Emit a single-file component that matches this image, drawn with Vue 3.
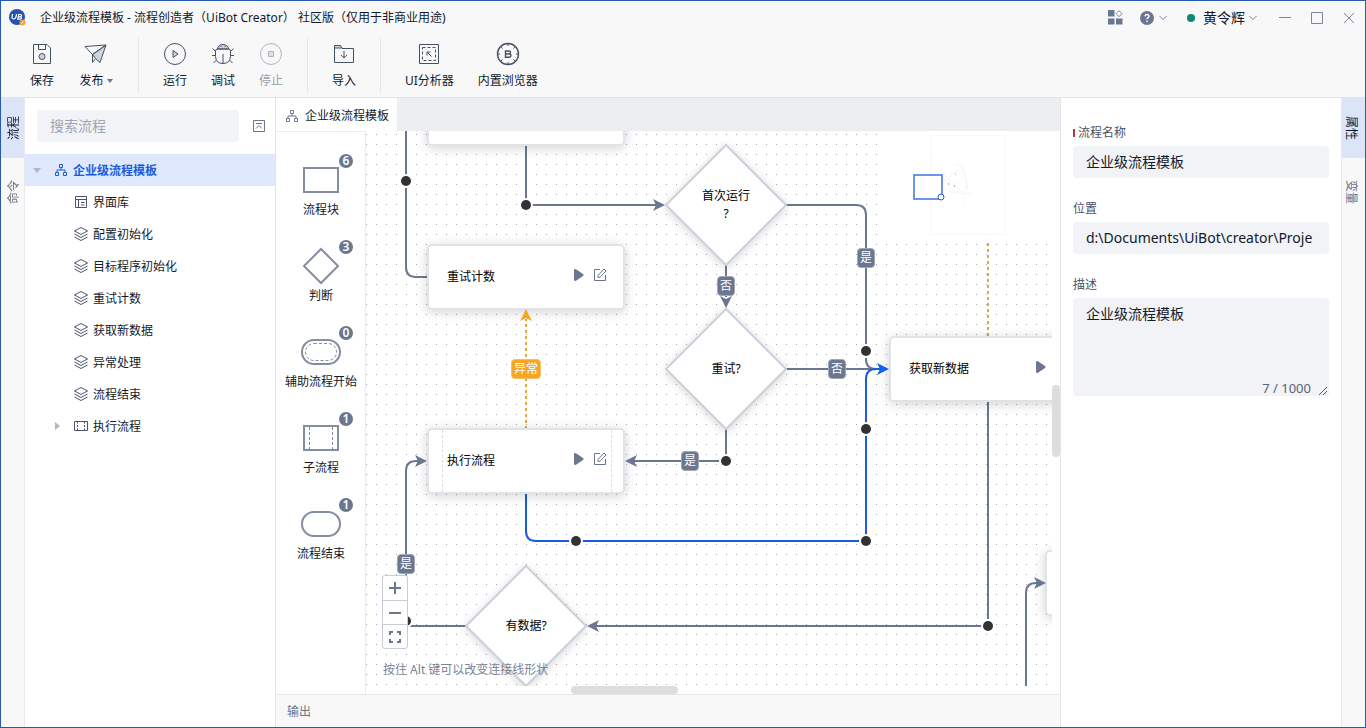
<script setup>
import { ref } from 'vue'

const search = ref('')
const flowName = ref('企业级流程模板')
const location = ref('d:\\Documents\\UiBot\\creator\\Proje')
const description = ref('企业级流程模板')

const toolGroups = [
  [
    { id: 'save', label: '保存' },
    { id: 'publish', label: '发布', menu: true },
  ],
  [
    { id: 'run', label: '运行' },
    { id: 'debug', label: '调试' },
    { id: 'stop', label: '停止', disabled: true },
  ],
  [{ id: 'import', label: '导入' }],
  [
    { id: 'analyzer', label: 'UI分析器', wide: true },
    { id: 'browser', label: '内置浏览器', wide: true },
  ],
]

const tree = [
  { label: '企业级流程模板', icon: 'root' },
  { label: '界面库', icon: 'library' },
  { label: '配置初始化', icon: 'layers' },
  { label: '目标程序初始化', icon: 'layers' },
  { label: '重试计数', icon: 'layers' },
  { label: '获取新数据', icon: 'layers' },
  { label: '异常处理', icon: 'layers' },
  { label: '流程结束', icon: 'layers' },
  { label: '执行流程', icon: 'sub' },
]

const palette = [
  { id: 'block', label: '流程块', count: 6 },
  { id: 'decision', label: '判断', count: 3 },
  { id: 'aux', label: '辅助流程开始', count: 0 },
  { id: 'sub', label: '子流程', count: 1 },
  { id: 'end', label: '流程结束', count: 1 },
]

const edges = [
  { kind: 'plain', d: 'M40 0V136Q40 146 50 146H62' },
  { kind: 'plain', d: 'M160 14V74H290' },
  { kind: 'plain', d: 'M420 74H490Q500 74 500 84V228Q500 238 510 238H516' },
  { kind: 'plain', d: 'M360 134V166' },
  { kind: 'plain', d: 'M420 238H516' },
  { kind: 'plain', d: 'M360 298V330H268' },
  { kind: 'plain', d: 'M622 271V495H230' },
  { kind: 'plain', d: 'M100 495H40V340Q40 330 50 330H54' },
  { kind: 'plain', d: 'M660 556V462Q660 452 670 452H672' },
  { kind: 'error', d: 'M160 298V188' },
  { kind: 'error', d: 'M622 100V206' },
  { kind: 'active', d: 'M160 363V400Q160 410 170 410H500V248Q500 238 510 238H516' },
]

const arrows = [
  { kind: 'plain', x: 299, y: 74, turn: 0 },
  { kind: 'plain', x: 360, y: 177, turn: 90 },
  { kind: 'plain', x: 259, y: 330, turn: 180 },
  { kind: 'plain', x: 221, y: 495, turn: 180 },
  { kind: 'plain', x: 61, y: 330, turn: 0 },
  { kind: 'plain', x: 680, y: 452, turn: 0 },
  { kind: 'error', x: 160, y: 178, turn: -90 },
  { kind: 'active', x: 523, y: 238, turn: 0 },
]

const joints = [
  [40, 50], [160, 74], [500, 220], [360, 330], [500, 298],
  [210, 410], [500, 410], [622, 495], [40, 490],
]

const blocks = [
  { x: 61, y: -51, label: '' },
  { x: 61, y: 113, label: '重试计数', edit: true },
  { x: 61, y: 297, label: '执行流程', edit: true, sub: true },
  { x: 523, y: 205, label: '获取新数据', edit: true },
  { x: 679, y: 419, label: '' },
]

const decisions = [
  { x: 300, y: 14, label: '首次运行\n?' },
  { x: 300, y: 178, label: '重试?' },
  { x: 100, y: 435, label: '有数据?' },
]

const tags = [
  { x: 500, y: 127, label: '是' },
  { x: 360, y: 155, label: '否' },
  { x: 471, y: 238, label: '否' },
  { x: 324, y: 330, label: '是' },
  { x: 40, y: 433, label: '是' },
  { x: 160, y: 238, label: '异常', error: true },
]

const at = (o) => ({ left: o.x + 'px', top: o.y + 'px' })
</script>

<template>
  <div class="window">
    <header>
      <div class="titlebar">
        <svg class="logo" width="18" height="18" viewBox="0 0 18 18">
          <circle cx="8" cy="8" r="8" fill="#2452b5" />
          <path d="M3.500 5 3 8Q2.800 10 4.500 10T7 8L7.500 5M8.800 10.200 9.700 5.500H11.300Q12.700 5.500 12.500 6.700T11 7.800H9.500 11.300Q12.700 8 12.400 9.200T10.800 10.200Z" fill="none" stroke="#fff" stroke-width="1.200" />
          <circle cx="13.500" cy="13.500" r="3" fill="#eaa244" />
          <path d="M12.500 14.500 14.500 12.500" stroke="#fff" />
        </svg>
        <h1>企业级流程模板 - 流程创造者（UiBot Creator） 社区版（仅用于非商业用途)</h1>
        <div class="title-actions">
          <button class="bare" aria-label="应用">
            <svg width="15" height="15" viewBox="0 0 15 15">
              <path d="M0 0H6.500V6.500H0ZM0 8.500H6.500V14.500H0ZM8 8.500H14.500V14.500H8Z" fill="#6b7690" />
              <path d="M11 .7 14 3.700 11 6.700 8 3.700Z" fill="none" stroke="#7d879b" />
            </svg>
          </button>
          <button class="bare help" aria-label="帮助">
            <svg width="14" height="14" viewBox="0 0 14 14">
              <circle cx="7" cy="7" r="7" fill="#6b7690" />
              <path d="M5 5.300Q5.200 3.500 7 3.500T9 5.200Q9 6.200 7.800 6.800 7 7.300 7 8.300M7 9.500V11" fill="none" stroke="#fff" stroke-width="1.400" />
            </svg>
            <svg width="8" height="6" viewBox="0 0 8 6"><path d="M.5 1 4 4.500 7.500 1" class="chev" /></svg>
          </button>
          <button class="bare user">
            <i class="online"></i><span>黄令辉</span>
            <svg width="8" height="6" viewBox="0 0 8 6"><path d="M.5 1 4 4.500 7.500 1" class="chev" /></svg>
          </button>
          <div class="win-buttons">
            <button class="bare" aria-label="最小化"><svg width="12" height="12"><path d="M0 5.500H12" class="win" /></svg></button>
            <button class="bare" aria-label="最大化"><svg width="12" height="12"><path d="M.5 .5H11.500V11.500H.5Z" class="win" /></svg></button>
            <button class="bare" aria-label="关闭"><svg width="12" height="12"><path d="M1 1 11 11M11 1 1 11" class="win" /></svg></button>
          </div>
        </div>
      </div>

      <nav class="toolbar">
        <div v-for="(group, g) in toolGroups" :key="g" class="tool-group">
          <button v-for="t in group" :key="t.id" class="tool" :class="{ wide: t.wide, menu: t.menu }" :disabled="t.disabled">
            <svg width="24" height="24" viewBox="0 0 24 24">
              <template v-if="t.id === 'save'">
                <path d="M3.500 2.500H17L20.500 6V21.500H3.500ZM8.500 2.500V7.500H15.500V2.500" />
                <circle cx="12" cy="14.500" r="3" class="tint" />
              </template>
              <template v-else-if="t.id === 'publish'">
                <path d="M8.500 12.500 22 3 16 20.500 11.500 16.500Z" class="tint" />
                <path d="M8.500 12.500 1 4.500 22 3 8.500 12.500V20.500L11.500 16.500" />
              </template>
              <template v-else-if="t.id === 'run'">
                <circle cx="12" cy="12" r="10.500" />
                <path d="M10 8.500 15 12 10 15.500Z" class="tint" />
              </template>
              <template v-else-if="t.id === 'debug'">
                <path d="M6.500 7Q7 2.500 12 2.500T17.500 7Z" class="tint" />
                <path d="M4.500 9Q4.500 7 6.500 7H17.500Q19.500 7 19.500 9V14.500Q19 21.500 12 21.500T4.500 14.500ZM12 12V21.500M4.500 9.500 1.500 6.500M19.500 9.500 22.500 6.500M4.500 13.500H1M19.500 13.500H23M5.500 18 2.500 21M18.500 18 21.500 21M9.500 4.500H10.500M13.500 4.500H14.500" />
              </template>
              <template v-else-if="t.id === 'stop'">
                <circle cx="12" cy="12" r="10.500" />
                <path d="M9.500 9.500H14.500V14.500H9.500Z" class="tint" />
              </template>
              <template v-else-if="t.id === 'import'">
                <path d="M2.500 6V3.500H8.500L10 6Z" class="tint" />
                <path d="M2.500 6V20.500H21.500V6.500H10M12 9V16M9 13 12 16 15 13" />
              </template>
              <template v-else-if="t.id === 'analyzer'">
                <path d="M2.500 2.500H21.500V21.500H2.500Z" />
                <path d="M5.500 5.500H18.500V18.500H5.500Z" stroke-dasharray="3 2" />
                <path d="M10 13.500V10H13.500M10 10 14.500 14.500" />
              </template>
              <template v-else>
                <circle cx="12" cy="12" r="10.500" stroke-width="1.400" />
                <path d="M12 1.500V4M12 20V22.500M1.500 12H4M20 12H22.500M5 5 6.500 6.500M19 5 17.500 6.500M5 19 6.500 17.500M19 19 17.500 17.500" />
                <path d="M9.500 9H13Q14.500 9 14.500 10.500T13 12H9.500 13.500Q15 12.200 15 13.600T13.500 15.200H9.500Z" stroke-width="1.400" />
              </template>
            </svg>
            <span class="tool-label">{{ t.label }}<i v-if="t.menu" class="caret"></i></span>
          </button>
        </div>
      </nav>
    </header>

    <main>
      <nav class="rail left">
        <button class="on"><span>流程</span></button>
        <button><span>命令</span></button>
      </nav>

      <aside class="explorer">
        <div class="search-row">
          <input v-model="search" type="text" placeholder="搜索流程" aria-label="搜索流程" />
          <button class="bare" aria-label="全部折叠">
            <svg width="12" height="12" viewBox="0 0 12 12"><path d="M.5 .5H11.500V11.500H.5ZM3 3.500H9M3 8.500 6 5.500 9 8.500" fill="none" stroke="#6b7690" /></svg>
          </button>
        </div>
        <ul class="tree">
          <li v-for="(n, i) in tree" :key="n.label">
            <button :class="['node-row', n.icon, { selected: i === 0 }]">
              <i class="twist"></i>
              <svg v-if="n.icon === 'root'" width="14" height="14" viewBox="0 0 14 14"><path d="M5.500 1.500H8.500V4.500H5.500ZM1.500 9.500H4.500V12.500H1.500ZM9.500 9.500H12.500V12.500H9.500ZM7 4.500V7M3 9.500V7H11V9.500" /></svg>
              <svg v-else-if="n.icon === 'library'" width="14" height="14" viewBox="0 0 14 14"><path d="M1.500 1.500H12.500V12.500H1.500ZM1.500 4.500H12.500M4.500 4.500V12.500M7 7.500H10.500M7 10H10.500" /></svg>
              <svg v-else-if="n.icon === 'layers'" width="14" height="14" viewBox="0 0 14 14"><path d="M7 .5 13.500 4 7 7.500 .5 4ZM.5 7 7 10.500 13.500 7M.5 10 7 13.500 13.500 10" /></svg>
              <svg v-else width="14" height="14" viewBox="0 0 14 14"><path d="M.5 2.500H13.500V11.500H.5Z" /><path d="M3.500 2.500V11.500M10.500 2.500V11.500" stroke-dasharray="2 1.500" /></svg>
              <span>{{ n.label }}</span>
            </button>
          </li>
        </ul>
      </aside>

      <section class="editor">
        <div class="tabs">
          <button class="tab">
            <svg width="14" height="14" viewBox="0 0 14 14"><path d="M5.500 1.500H8.500V4.500H5.500ZM1.500 9.500H4.500V12.500H1.500ZM9.500 9.500H12.500V12.500H9.500ZM7 4.500V7M3 9.500V7H11V9.500" /></svg>
            <span>企业级流程模板</span>
          </button>
        </div>

        <div class="workspace">
          <div class="palette">
            <button v-for="p in palette" :key="p.id" class="shape">
              <svg width="42" height="38" viewBox="0 0 42 38">
                <path v-if="p.id === 'block'" d="M4 7H38V31H4Z" />
                <path v-else-if="p.id === 'decision'" d="M21 2 38 19 21 36 4 19Z" />
                <template v-else-if="p.id === 'aux'">
                  <rect x="2" y="7" width="38" height="24" rx="12" />
                  <rect x="5.500" y="10.500" width="31" height="17" rx="8.500" class="thin" />
                </template>
                <template v-else-if="p.id === 'sub'">
                  <path d="M4 7H38V31H4Z" />
                  <path d="M9.500 8V30M32.500 8V30" class="thin" />
                </template>
                <rect v-else x="2" y="7" width="38" height="24" rx="12" />
              </svg>
              <span>{{ p.label }}</span>
              <b class="count">{{ p.count }}</b>
            </button>
          </div>

          <div class="viewport">
            <div class="canvas">
              <svg class="edges" width="100%" height="100%">
                <defs>
                  <pattern id="grid" width="10" height="10" patternUnits="userSpaceOnUse">
                    <rect x="0" y="3" width="1" height="1" fill="#a4a7ad" />
                  </pattern>
                </defs>
                <rect width="100%" height="100%" fill="url(#grid)" />
                <path v-for="e in edges" :key="e.d" :d="e.d" :class="['edge', e.kind]" />
              </svg>

              <div v-for="(b, i) in blocks" :key="'b' + i" class="block" :class="{ sub: b.sub }" :style="at(b)">
                <template v-if="b.label">
                  <span>{{ b.label }}</span>
                  <button class="bare" aria-label="运行此块"><svg width="12" height="14" viewBox="0 0 12 14"><path d="M1 2.500Q1 .5 3 1.300L10 6Q11.500 7 10 8L3 12.700Q1 13.500 1 11.500Z" fill="#6b7690" /></svg></button>
                  <button class="bare" aria-label="编辑"><svg width="14" height="14" viewBox="0 0 14 14"><path d="M7 1.500H1.500V12.500H12.500V7M5 9.500V7.500L11 1 13 3 7 9.200Z" fill="none" stroke="#6b7690" /></svg></button>
                </template>
              </div>

              <div v-for="d in decisions" :key="d.label" class="decision" :style="at(d)">
                <svg width="120" height="120" viewBox="0 0 120 120"><path d="M60 0 120 60 60 120 0 60Z" fill="#fff" stroke="#ccd0da" stroke-width="2" /></svg>
                <span>{{ d.label }}</span>
              </div>

              <svg class="edges" width="100%" height="100%">
                <path v-for="a in arrows" :key="a.x + '-' + a.y" d="M0 0-12-6-9 0-12 6Z" :class="['arrow', a.kind]" :transform="`translate(${a.x} ${a.y}) rotate(${a.turn})`" />
                <g v-for="j in joints" :key="j.join()">
                  <circle :cx="j[0]" :cy="j[1]" r="7" fill="#fff" />
                  <circle :cx="j[0]" :cy="j[1]" r="5" fill="#333" />
                </g>
              </svg>

              <span v-for="(t, i) in tags" :key="'t' + i" class="tag" :class="{ error: t.error }" :style="at(t)">{{ t.label }}</span>

              <div class="minimap">
                <svg width="172" height="109" viewBox="0 0 172 109">
                  <rect x="50.500" y="4.500" width="75" height="99" fill="#fff" stroke="#f8f8f9" />
                  <path d="M61 39V48H66M64 42 74 55 83 46 77 39 69 47M70 53V61H77V55M77 61H86V50M75 34H82L88 58M80 63H92M84 66V71M58 50H66" fill="none" stroke="#f4f4f7" />
                  <path d="M68 53H69M74 55H75" stroke="#667" />
                  <path d="M75 43H76" stroke="#f0a030" />
                  <rect x="34" y="44" width="28" height="24" fill="#fff" stroke="#3c76df" stroke-width="1.500" />
                  <circle cx="61" cy="66" r="3" fill="#fff" stroke="#1f5fd6" />
                </svg>
              </div>

              <div class="overlay">
                <div class="zoom">
                  <button aria-label="放大"><svg width="12" height="12"><path d="M6 0V12M0 6H12" /></svg></button>
                  <button aria-label="缩小"><svg width="12" height="12"><path d="M0 6H12" /></svg></button>
                  <button aria-label="适应画布"><svg width="12" height="12"><path d="M1 4V1H4M8 1H11V4M11 8V11H8M4 11H1V8" /></svg></button>
                </div>
                <p>按住 Alt 键可以改变连接线形状</p>
              </div>
            </div>
            <div class="vbar"><i></i></div>
            <div class="hbar"><i></i></div>
          </div>
        </div>

        <button class="output">输出</button>
      </section>

      <aside class="props">
        <div class="field">
          <label for="name" class="required">流程名称</label>
          <input id="name" v-model="flowName" type="text" />
        </div>
        <div class="field">
          <label for="path">位置</label>
          <input id="path" v-model="location" type="text" />
        </div>
        <div class="field">
          <label for="desc">描述</label>
          <div class="area">
            <textarea id="desc" v-model="description"></textarea>
            <span class="counter">{{ description.length }} / 1000</span>
            <svg class="grip" width="10" height="10"><path d="M1 9 9 1M5 9 9 5" stroke="#555" fill="none" /></svg>
          </div>
        </div>
      </aside>

      <nav class="rail right">
        <button class="on"><span>属性</span></button>
        <button><span>变量</span></button>
      </nav>
    </main>
  </div>
</template>

<style>
body {
  margin: 0;
  overflow: hidden;
}
</style>

<style scoped>
* {
  box-sizing: border-box;
}
.window {
  height: 100vh;
  display: flex;
  flex-direction: column;
  border: 1px solid #2a5aad;
  background: #f8f8f8;
  color: #111a2c;
  font-family: "Noto Sans", "Noto Sans CJK SC", sans-serif;
  font-size: 12px;
  line-height: 18px;
}
button,
input,
textarea {
  font: inherit;
  color: inherit;
  border: 0;
  margin: 0;
  padding: 0;
  background: none;
  outline: none;
}
svg {
  display: block;
  flex: none;
}
.bare {
  display: flex;
  align-items: center;
}
header {
  border-bottom: 1px solid #e2e4e9;
}
.titlebar {
  height: 33px;
  display: flex;
  align-items: center;
  padding: 0 10px 0 8px;
}
.logo {
  margin-right: 13px;
}
h1 {
  margin: 0;
  font-size: 12px;
  font-weight: 400;
  white-space: pre;
}
.title-actions {
  margin-left: auto;
  display: flex;
  align-items: center;
}
.help {
  gap: 5px;
  margin-left: 17px;
}
.user {
  gap: 4px;
  margin-left: 20px;
  font-size: 14px;
}
.online {
  width: 8px;
  height: 8px;
  margin-right: 4px;
  border-radius: 50%;
  background: #0b8a78;
}
.win-buttons {
  display: flex;
  gap: 20px;
  margin-left: 22px;
}
.chev,
.win {
  fill: none;
  stroke: #7d879b;
}
.toolbar {
  height: 63px;
  display: flex;
  padding: 4px 5px;
}
.tool-group {
  display: flex;
  padding: 0 12px;
}
.tool-group + .tool-group {
  border-left: 1px solid #e4e6eb;
}
.tool {
  width: 48px;
  display: flex;
  flex-direction: column;
  align-items: center;
  gap: 6px;
  padding-top: 4px;
}
.tool.menu {
  width: 60px;
}
.tool.wide {
  width: auto;
  min-width: 72px;
  padding: 4px 12px 0;
}
.tool svg {
  fill: none;
  stroke: #475166;
}
.tool .tint {
  fill: #cdd3df;
}
.tool:disabled {
  color: #9a9fa9;
}
.tool:disabled svg {
  stroke: #b1b5be;
}
.tool:disabled .tint {
  fill: #dddfe4;
}
.tool-label {
  display: flex;
  align-items: center;
  white-space: nowrap;
}
.caret {
  border: 3px solid transparent;
  border-top: 4px solid #6b7690;
  border-bottom: 0;
  margin-left: 3px;
}
main {
  flex: 1;
  min-height: 0;
  display: flex;
}
.rail {
  width: 24px;
  display: flex;
  flex-direction: column;
  gap: 4px;
  color: #6b7387;
}
.rail.left {
  border-right: 1px solid #e6e8ec;
}
.rail.right {
  border-left: 1px solid #e6e8ec;
}
.rail button {
  height: 60px;
  display: flex;
  align-items: center;
  justify-content: center;
}
.rail.left button {
  padding-left: 3px;
}
.rail.right button {
  padding-right: 5px;
}
.rail .on {
  background: #dce5f8;
  color: #111a2c;
}
.rail span {
  writing-mode: vertical-rl;
  text-orientation: sideways;
}
.rail.left span {
  transform: rotate(180deg);
}
.explorer {
  width: 250px;
  background: #fff;
}
.search-row {
  display: flex;
  align-items: center;
  gap: 14px;
  padding: 12px 10px 12px 12px;
}
.search-row input,
.field input,
.area {
  border-radius: 4px;
  background: #f1f3f7;
  font-size: 14px;
}
.search-row input {
  flex: 1;
  min-width: 0;
  height: 32px;
  padding: 0 13px 2px;
}
.search-row input::placeholder {
  color: #9ea5b4;
}
.tree {
  list-style: none;
  margin: 0;
  padding: 0;
}
.node-row {
  width: 100%;
  height: 32px;
  display: flex;
  align-items: center;
  padding-left: 49px;
  text-align: left;
}
.node-row span {
  padding-top: 2px;
}
.node-row svg {
  margin-right: 5px;
  fill: none;
  stroke: #4a5468;
}
.node-row.root {
  padding-left: 8px;
}
.node-row.sub {
  padding-left: 30px;
}
.twist {
  width: 0;
}
.root .twist {
  width: 8px;
  border: 4px solid transparent;
  border-top: 5px solid #b0b6c5;
  border-bottom: 0;
  margin-right: 13px;
}
.sub .twist {
  width: 5px;
  border: 4px solid transparent;
  border-left: 5px solid #b0b6c5;
  border-right: 0;
  margin-right: 14px;
}
.node-row.selected {
  background: #dfe8fc;
  color: #1a5cdd;
  font-weight: 700;
}
.selected svg {
  stroke: #1a5cdd;
}
.editor {
  flex: 1;
  min-width: 0;
  display: flex;
  flex-direction: column;
  border: solid #e4e5e9;
  border-width: 0 1px;
}
.tabs {
  height: 33px;
  display: flex;
  background: #edeef2;
}
.tab {
  display: flex;
  align-items: center;
  gap: 6px;
  padding: 2px 8px 0 9px;
  background: #fff;
}
.tab svg {
  fill: none;
  stroke: #6b7690;
}
.workspace {
  flex: 1;
  min-height: 0;
  display: flex;
  background: #fff;
  border-bottom: 1px solid #e4e5e9;
}
.palette {
  width: 90px;
  display: flex;
  flex-direction: column;
  gap: 16px;
  padding: 20px 0 0 1px;
  border: solid #ececef;
  border-width: 1px 1px 0 0;
}
.shape {
  position: relative;
  height: 70px;
  display: flex;
  flex-direction: column;
  align-items: center;
  gap: 2px;
  padding-top: 9px;
  white-space: nowrap;
}
.shape svg {
  fill: #fff;
  stroke: #848da2;
  stroke-width: 2px;
}
.shape .thin {
  stroke-width: 1px;
  stroke-dasharray: 3 2;
}
.count {
  position: absolute;
  top: 2px;
  right: 12px;
  width: 14px;
  height: 14px;
  border-radius: 50%;
  background: #6b7690;
  color: #fff;
  font-weight: 600;
  line-height: 14px;
}
.viewport {
  flex: 1;
  min-width: 0;
  display: grid;
  grid-template: minmax(0, 1fr) 8px / minmax(0, 1fr) 8px;
}
.canvas {
  position: relative;
  overflow: hidden;
  color: #000;
}
.edges {
  position: absolute;
  inset: 0;
}
.edge {
  fill: none;
  stroke: #6b7690;
  stroke-width: 2px;
}
.edge.error {
  stroke: #e5a63a;
  stroke-width: 2px;
  stroke-dasharray: 3 3;
}
.edge.active {
  stroke: #1a5cdd;
}
.arrow {
  fill: #6b7690;
}
.arrow.error {
  fill: #f5a623;
}
.arrow.active {
  fill: #1160f5;
}
.block {
  position: absolute;
  width: 198px;
  height: 66px;
  display: flex;
  align-items: center;
  gap: 8px;
  padding: 0 16px 5px 18px;
  border: 2px solid #e0e4ea;
  border-radius: 5px;
  background: #fff;
  box-shadow: 0 2px 12px rgba(0, 0, 0, 0.18);
}
.block span {
  flex: 1;
  padding-top: 4px;
}
.block.sub::before {
  content: "";
  position: absolute;
  inset: 0 11px 0 13px;
  border: dashed #dcdfe4;
  border-width: 0 1px;
  pointer-events: none;
}
.decision {
  position: absolute;
  width: 120px;
  height: 120px;
  display: grid;
  place-items: center;
}
.decision svg,
.decision span {
  grid-area: 1 / 1;
}
.decision svg {
  overflow: visible;
  filter: drop-shadow(0 2px 5px rgba(0, 0, 0, 0.16));
}
.decision span {
  z-index: 1;
  text-align: center;
  white-space: pre-line;
}
.tag {
  position: absolute;
  transform: translate(-50%, -50%);
  padding: 0 2px;
  border: 1px solid #a0a7b7;
  border-radius: 4px;
  background: #6b7690;
  color: #fff;
  white-space: nowrap;
}
.tag.error {
  border-color: #f5bf66;
  background: #f5a623;
}
.minimap {
  position: absolute;
  top: 0;
  right: 0;
  background: #fff;
}
.overlay {
  position: absolute;
  left: 16px;
  bottom: 7px;
  color: #7a8296;
}
.overlay p {
  margin: 12px 0 0 1px;
}
.zoom {
  width: 26px;
  display: flex;
  flex-direction: column;
  border: 1px solid #c9cdd6;
  border-radius: 3px;
  background: #fff;
}
.zoom button {
  height: 24px;
  display: flex;
  align-items: center;
  justify-content: center;
}
.zoom button + button {
  border-top: 1px solid #c9cdd6;
}
.zoom svg {
  fill: none;
  stroke: #6b7690;
  stroke-width: 2px;
}
.vbar,
.hbar {
  display: flex;
}
.vbar {
  padding-top: 254px;
}
.vbar i,
.hbar i {
  border-radius: 4px;
  background: #dcdddf;
}
.vbar i {
  width: 8px;
  height: 72px;
}
.hbar {
  padding-left: 205px;
}
.hbar i {
  width: 107px;
  height: 8px;
}
.output {
  height: 32px;
  padding: 2px 11px 0;
  text-align: left;
  color: #6b7387;
}
.props {
  width: 280px;
  padding: 26px 12px;
  background: #fff;
}
.field {
  display: flex;
  flex-direction: column;
  gap: 4px;
  margin-bottom: 22px;
}
.field label {
  color: #475166;
}
.required {
  display: flex;
  align-items: center;
  gap: 3px;
}
.required::before {
  content: "";
  width: 2px;
  height: 8px;
  background: #b5393f;
}
.field input {
  height: 32px;
  padding: 0 13px 2px;
}
.area {
  position: relative;
  height: 98px;
}
.area textarea {
  display: block;
  width: 100%;
  height: 100%;
  padding: 7px 13px;
  resize: none;
}
.counter {
  position: absolute;
  right: 18px;
  bottom: -1px;
  font-size: 13px;
  color: #5a6375;
}
.grip {
  position: absolute;
  right: 1px;
  bottom: 0;
}
</style>
